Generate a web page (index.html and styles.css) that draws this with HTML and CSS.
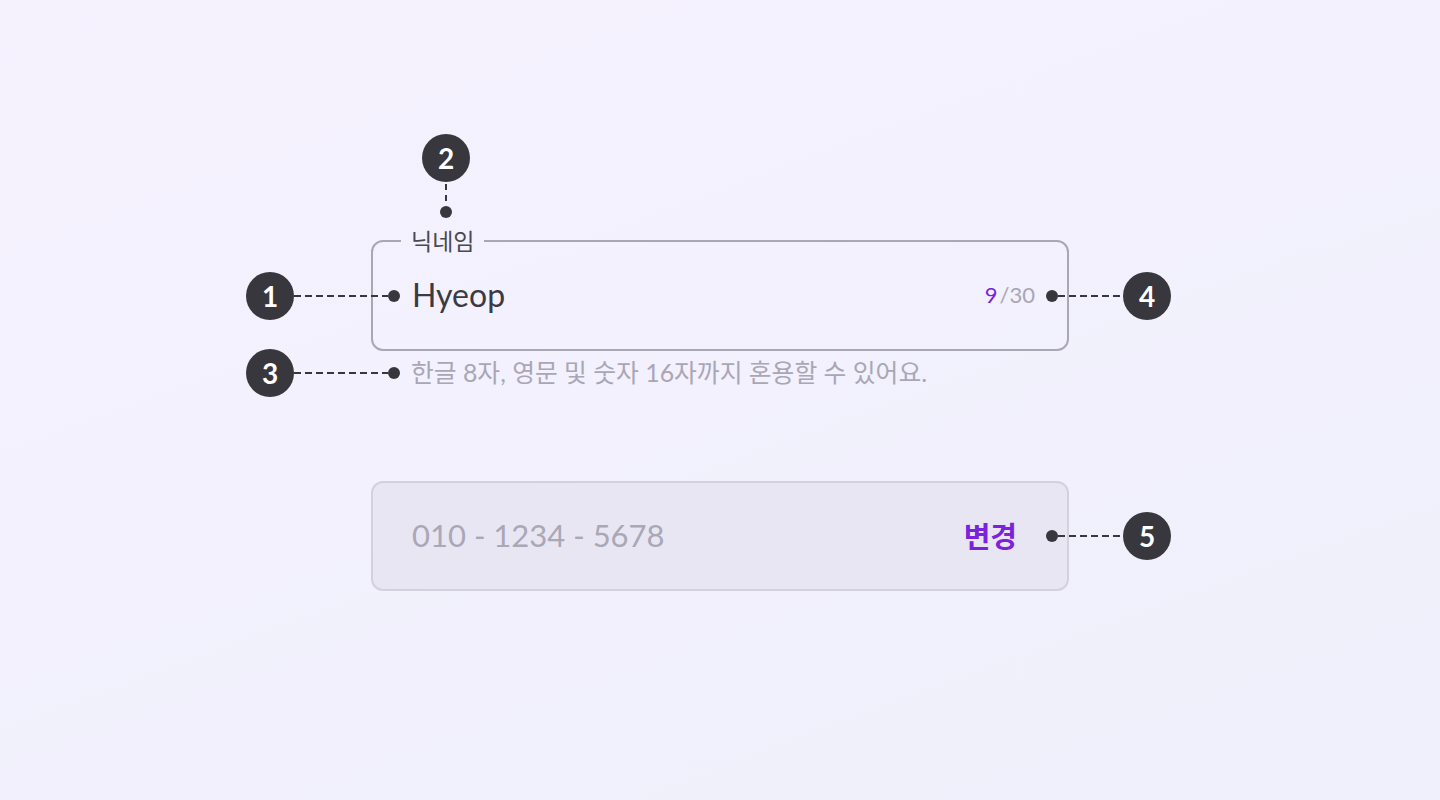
FILE: index.html
```html
<!DOCTYPE html>
<html lang="ko">
<head>
<meta charset="utf-8">
<title>Text field anatomy</title>
<link rel="stylesheet" href="styles.css">
</head>
<body>
<main class="page">
  <div class="stage">
    <div class="field-group">
      <fieldset class="field">
        <legend class="field-label">닉네임</legend>
        <div class="field-row">
          <span class="field-value">Hyeop</span>
          <span class="counter"><span class="counter-current">9</span>/30</span>
        </div>
      </fieldset>
      <p class="helper">한글 8자, 영문 및 숫자 16자까지 혼용할 수 있어요.</p>
    </div>

    <div class="field field-disabled">
      <div class="field-row">
        <span class="field-value muted">010 - 1234 - 5678</span>
        <span class="action">변경</span>
      </div>
    </div>

    <div class="callout callout-1"><span class="badge">1</span><span class="dash"></span><span class="dot"></span></div>
    <div class="callout callout-2 vertical"><span class="badge">2</span><span class="dash"></span><span class="dot"></span></div>
    <div class="callout callout-3"><span class="badge">3</span><span class="dash"></span><span class="dot"></span></div>
    <div class="callout callout-4"><span class="dot"></span><span class="dash"></span><span class="badge">4</span></div>
    <div class="callout callout-5"><span class="dot"></span><span class="dash"></span><span class="badge">5</span></div>
  </div>
</main>
</body>
</html>
```

FILE: styles.css
```css
* { box-sizing: border-box; }
html, body { margin: 0; height: 100%; }
body {
  background: linear-gradient(160deg, #f5f2fe 0%, #f2f1fd 50%, #eff0fb 100%);
  font-family: Lato, "Noto Sans CJK KR", sans-serif;
  color: #3b3a42;
}
.page {
  width: 1440px;
  height: 800px;
  padding-top: 229px;
  display: flex;
  justify-content: center;
}
.stage {
  position: relative;
  width: 698px;
  display: flex;
  flex-direction: column;
}
.field {
  margin: 0;
  padding: 0;
  border: 2px solid #aaa6b4;
  border-radius: 12px;
  min-inline-size: 0;
}
.field-label {
  margin-left: 28px;
  padding: 0 10px;
  font-size: 23px;
  line-height: 24px;
  color: #4a4851;
}
.field-row {
  height: 106px;
  margin-top: -10px;
  padding: 0 32px 3px 39px;
  display: flex;
  align-items: center;
  justify-content: space-between;
}
.field-value {
  font-size: 32px;
  color: #3b3a42;
}
.counter {
  font-size: 22px;
  color: #a9a5b5;
}
.counter-current { color: #7a1fdf; margin-right: 2px; }
.helper {
  margin: 10px 0 0 40px;
  font-size: 24.8px;
  line-height: 24px;
  color: #a9a6b6;
}
.field-disabled {
  margin-top: 96px;
  height: 110px;
  background: #e8e6f3;
  border-color: #d4d1df;
}
.field-disabled .field-row {
  margin-top: 0;
  padding-right: 50px;
}
.field-disabled .field-value { font-size: 31px; }
.muted { color: #aaa7b7; }
.action {
  font-size: 29px;
  font-weight: 700;
  color: #7b22dc;
}

/* callouts */
.callout {
  position: absolute;
  display: flex;
  align-items: center;
}
.badge {
  width: 48px;
  height: 48px;
  border-radius: 50%;
  background: #38373d;
  color: #fff;
  font-weight: 700;
  font-size: 28px;
  display: flex;
  align-items: center;
  justify-content: center;
  flex: none;
}
.dot {
  width: 12px;
  height: 12px;
  border-radius: 50%;
  background: #38373d;
  flex: none;
}
.dash {
  height: 2px;
  background: repeating-linear-gradient(90deg, #38373d 0 7px, transparent 7px 11px);
}
.vertical { flex-direction: column; }
.vertical .dash {
  width: 2px;
  height: 24px;
  background: repeating-linear-gradient(180deg, transparent 0 2px, #38373d 2px 8px, transparent 8px 11px);
}
.callout-1 { left: -125px; top: 43px; }
.callout-1 .dash, .callout-3 .dash { width: 94px; }
.callout-3 { left: -125px; top: 120px; }
.callout-2 { left: 51px; top: -95px; }
.callout-4 { left: 675px; top: 43px; }
.callout-5 { left: 675px; top: 283px; }
.callout-4 .dash, .callout-5 .dash { width: 65px; }
```
